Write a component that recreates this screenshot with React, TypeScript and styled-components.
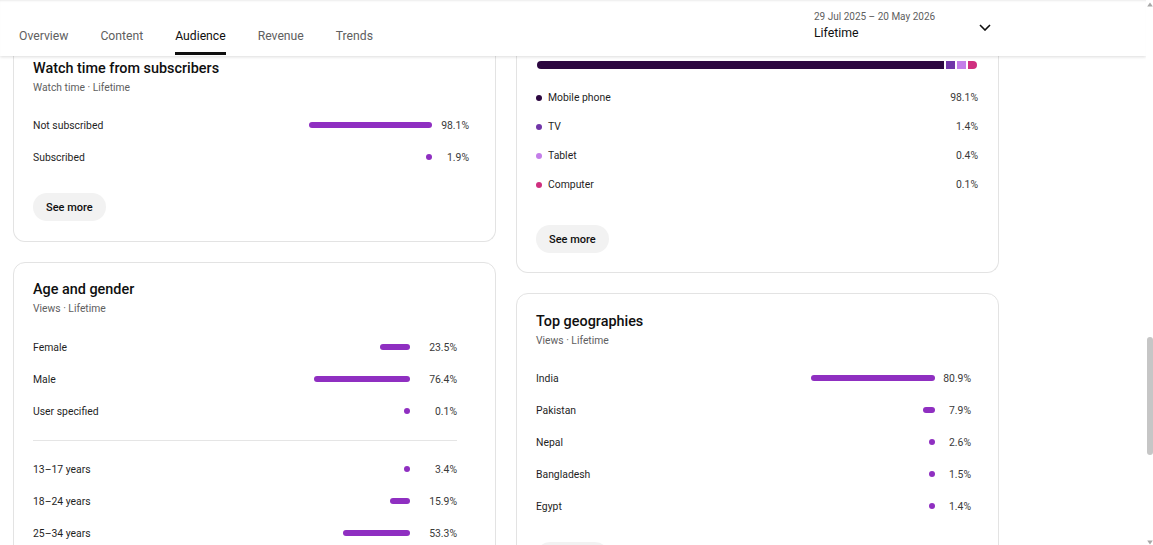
import React from 'react';
import styled, { createGlobalStyle, css } from 'styled-components';

const GlobalStyle = createGlobalStyle`
  html, body { margin: 0; padding: 0; height: 100%; background: #fff; }
  body { font-family: Roboto, "Noto Sans", Arial, sans-serif; color: #0f0f0f; overflow: hidden; }
  * { box-sizing: border-box; }
`;

const BAR = '#8f2fc1';

const Page = styled.div`
  display: flex;
  height: 100vh;
  overflow: hidden;
  background: #fff;
`;

const Main = styled.div`
  flex: 1;
  min-width: 0;
  display: flex;
  flex-direction: column;
  overflow: hidden;
`;

const Header = styled.header`
  position: relative;
  z-index: 1;
  flex: none;
  height: 56px;
  display: flex;
  align-items: stretch;
  padding: 0 155px 0 19px;
  background: #fff;
  box-shadow: 0 1px 3px rgba(0, 0, 0, 0.14), inset 0 2px 2px -1px rgba(0, 0, 0, 0.08);
`;

const TabList = styled.nav`
  display: flex;
  gap: 32px;
  align-self: flex-end;
`;

const Tab = styled.div<{ $active?: boolean }>`
  position: relative;
  height: 38px;
  padding-top: 9px;
  font-size: 12.2px;
  line-height: 18px;
  font-weight: 400;
  color: ${(p) => (p.$active ? '#0f0f0f' : '#606060')};
  &::after {
    content: '';
    position: absolute;
    left: 0;
    right: 0;
    bottom: 1px;
    height: 3px;
    background: ${(p) => (p.$active ? '#0f0f0f' : 'transparent')};
  }
`;

const DatePicker = styled.div`
  margin-left: auto;
  align-self: flex-start;
  width: 177px;
  padding-top: 10px;
  display: flex;
  align-items: center;
`;

const DateText = styled.div`
  flex: 1;
  display: flex;
  flex-direction: column;
`;

const DateRange = styled.span`
  font-size: 10px;
  line-height: 14px;
  color: #606060;
`;

const Period = styled.span`
  font-size: 12.3px;
  line-height: 18px;
  color: #0f0f0f;
`;

const Chevron = styled.svg`
  flex: none;
  margin-top: 2px;
  display: block;
`;

const Body = styled.main`
  flex: 1;
  min-height: 0;
  overflow: hidden;
  display: grid;
  grid-template-columns: 483px 483px;
  column-gap: 20px;
  padding-left: 13px;
  align-items: start;
`;

const Column = styled.div`
  display: flex;
  flex-direction: column;
  gap: 20px;
`;

const Card = styled.section<{ $clipTop?: number; $padBottom?: number; $padTop?: number }>`
  display: flex;
  flex-direction: column;
  background: #fff;
  border: 1px solid #e3e3e3;
  border-radius: 12px;
  padding: ${(p) => p.$padTop ?? 16}px 20px ${(p) => p.$padBottom ?? 20}px 19px;
  ${(p) =>
    p.$clipTop !== undefined &&
    css`
      border-top: none;
      border-top-left-radius: 0;
      border-top-right-radius: 0;
      padding-top: ${p.$clipTop}px;
    `}
`;

const Title = styled.h2`
  margin: 0;
  padding-top: 1px;
  font-size: 14.4px;
  line-height: 20px;
  font-weight: 500;
  color: #0f0f0f;
`;

const Subtitle = styled.div`
  margin-top: 1px;
  font-size: 10.3px;
  line-height: 16px;
  color: #606060;
`;

const Table = styled.div<{ $top: number; $endGap: number }>`
  margin-top: ${(p) => p.$top}px;
  padding-right: ${(p) => p.$endGap}px;
  display: flex;
  flex-direction: column;
`;

const Row = styled.div`
  height: 32px;
  display: flex;
  align-items: center;
`;

const Label = styled.span`
  flex: 1;
  font-size: 10.4px;
  color: #1f1f1f;
`;

const Bar = styled.span`
  flex: none;
  height: 6px;
  border-radius: 3px;
  background: ${BAR};
`;

const Value = styled.span<{ $width: number }>`
  flex: none;
  width: ${(p) => p.$width}px;
  text-align: right;
  font-size: 10.4px;
  color: #3a3a3a;
`;

const Divider = styled.hr`
  margin: 13px 0 12px;
  border: none;
  height: 1px;
  background: #e5e5e5;
`;

const SeeMore = styled.button<{ $top?: number }>`
  align-self: flex-start;
  margin-top: ${(p) => p.$top ?? 20}px;
  height: 28px;
  padding: 0 13px;
  border: none;
  border-radius: 14px;
  background: #f2f2f2;
  font-family: inherit;
  font-size: 11px;
  font-weight: 500;
  color: #0f0f0f;
`;

const StackBar = styled.div`
  margin-left: 1px;
  margin-right: 1px;
  display: flex;
  gap: 2px;
  height: 8px;
  border-radius: 4px;
  overflow: hidden;
`;

const Segment = styled.span<{ $color: string; $grow?: boolean }>`
  flex: ${(p) => (p.$grow ? '1' : 'none')};
  background: ${(p) => p.$color};
`;

const Legend = styled.div`
  margin-top: 14px;
  display: flex;
  flex-direction: column;
`;

const LegendRow = styled.div`
  height: 29px;
  display: flex;
  align-items: center;
`;

const Dot = styled.span<{ $color: string }>`
  flex: none;
  width: 6px;
  height: 6px;
  border-radius: 50%;
  margin: 0 6px 0 0;
  background: ${(p) => p.$color};
`;

const Rail = styled.div`
  flex: none;
  width: 7px;
  display: flex;
  flex-direction: column;
  align-items: center;
  background: #fff;
`;

const RailArrow = styled.svg<{ $top?: number }>`
  flex: none;
  display: block;
  margin-top: ${(p) => p.$top ?? 0}px;
`;

const Track = styled.div`
  flex: 1;
  display: flex;
  flex-direction: column;
  align-items: center;
`;

const Thumb = styled.div`
  margin-top: 330px;
  width: 6px;
  height: 118px;
  border-radius: 3px;
  background: #c6c6c6;
`;

type Item = { label: string; pct: string; value: number };

const barWidth = (v: number, scale: number) => Math.max(6, v * scale);

const DataRows = ({ items, scale, valueWidth }: { items: Item[]; scale: number; valueWidth: number }) => (
  <>
    {items.map((it) => (
      <Row key={it.label}>
        <Label>{it.label}</Label>
        <Bar style={{ width: barWidth(it.value, scale) }} />
        <Value $width={valueWidth}>{it.pct}</Value>
      </Row>
    ))}
  </>
);

const subs: Item[] = [
  { label: 'Not subscribed', pct: '98.1%', value: 98.1 },
  { label: 'Subscribed', pct: '1.9%', value: 1.9 },
];

const gender: Item[] = [
  { label: 'Female', pct: '23.5%', value: 23.5 },
  { label: 'Male', pct: '76.4%', value: 76.4 },
  { label: 'User specified', pct: '0.1%', value: 0.1 },
];

const ages: Item[] = [
  { label: '13–17 years', pct: '3.4%', value: 3.4 },
  { label: '18–24 years', pct: '15.9%', value: 15.9 },
  { label: '25–34 years', pct: '53.3%', value: 53.3 },
];

const geos: Item[] = [
  { label: 'India', pct: '80.9%', value: 80.9 },
  { label: 'Pakistan', pct: '7.9%', value: 7.9 },
  { label: 'Nepal', pct: '2.6%', value: 2.6 },
  { label: 'Bangladesh', pct: '1.5%', value: 1.5 },
  { label: 'Egypt', pct: '1.4%', value: 1.4 },
];

const devices = [
  { label: 'Mobile phone', pct: '98.1%', color: '#2c0740' },
  { label: 'TV', pct: '1.4%', color: '#7136a8' },
  { label: 'Tablet', pct: '0.4%', color: '#c47ee9' },
  { label: 'Computer', pct: '0.1%', color: '#cf2f7f' },
];

const tabs = ['Overview', 'Content', 'Audience', 'Revenue', 'Trends'];

export default function App() {
  return (
    <>
      <GlobalStyle />
      <Page>
        <Main>
          <Header>
            <TabList>
              {tabs.map((t) => (
                <Tab key={t} $active={t === 'Audience'}>
                  {t}
                </Tab>
              ))}
            </TabList>
            <DatePicker>
              <DateText>
                <DateRange>29 Jul 2025 – 20 May 2026</DateRange>
                <Period>Lifetime</Period>
              </DateText>
              <Chevron width="12" height="7" viewBox="0 0 12 7">
                <path d="M1 1 L6 6 L11 1" fill="none" stroke="#0f0f0f" strokeWidth="1.6" />
              </Chevron>
            </DatePicker>
          </Header>
          <Body>
            <Column>
              <Card $clipTop={2}>
                <Title>Watch time from subscribers</Title>
                <Subtitle>Watch time · Lifetime</Subtitle>
                <Table $top={13} $endGap={6}>
                  <DataRows items={subs} scale={1.256} valueWidth={37} />
                </Table>
                <SeeMore>See more</SeeMore>
              </Card>
              <Card $padTop={16}>
                <Title>Age and gender</Title>
                <Subtitle>Views · Lifetime</Subtitle>
                <Table $top={14} $endGap={18}>
                  <DataRows items={gender} scale={1.256} valueWidth={47} />
                  <Divider />
                  <DataRows items={ages} scale={1.256} valueWidth={47} />
                </Table>
              </Card>
            </Column>
            <Column>
              <Card $clipTop={5} $padBottom={19}>
                <StackBar>
                  <Segment $grow $color="#2c0740" />
                  <Segment $color="#7136a8" style={{ width: 9 }} />
                  <Segment $color="#c47ee9" style={{ width: 9 }} />
                  <Segment $color="#cf2f7f" style={{ width: 9 }} />
                </StackBar>
                <Legend>
                  {devices.map((d) => (
                    <LegendRow key={d.label}>
                      <Dot $color={d.color} />
                      <Label>{d.label}</Label>
                      <Value $width={40}>{d.pct}</Value>
                    </LegendRow>
                  ))}
                </Legend>
                <SeeMore $top={26}>See more</SeeMore>
              </Card>
              <Card $padTop={17}>
                <Title>Top geographies</Title>
                <Subtitle>Views · Lifetime</Subtitle>
                <Table $top={13} $endGap={7}>
                  <DataRows items={geos} scale={1.533} valueWidth={36} />
                </Table>
                <SeeMore>See more</SeeMore>
              </Card>
            </Column>
          </Body>
        </Main>
        <Rail>
          <RailArrow $top={2} width="6" height="5" viewBox="0 0 6 5">
            <path d="M3 0.5 L5.8 4.5 L0.2 4.5 Z" fill="#a8a8a8" />
          </RailArrow>
          <Track>
            <Thumb />
          </Track>
          <RailArrow width="6" height="5" viewBox="0 0 6 5">
            <path d="M0.2 0.5 L5.8 0.5 L3 4.5 Z" fill="#a8a8a8" />
          </RailArrow>
        </Rail>
      </Page>
    </>
  );
}
